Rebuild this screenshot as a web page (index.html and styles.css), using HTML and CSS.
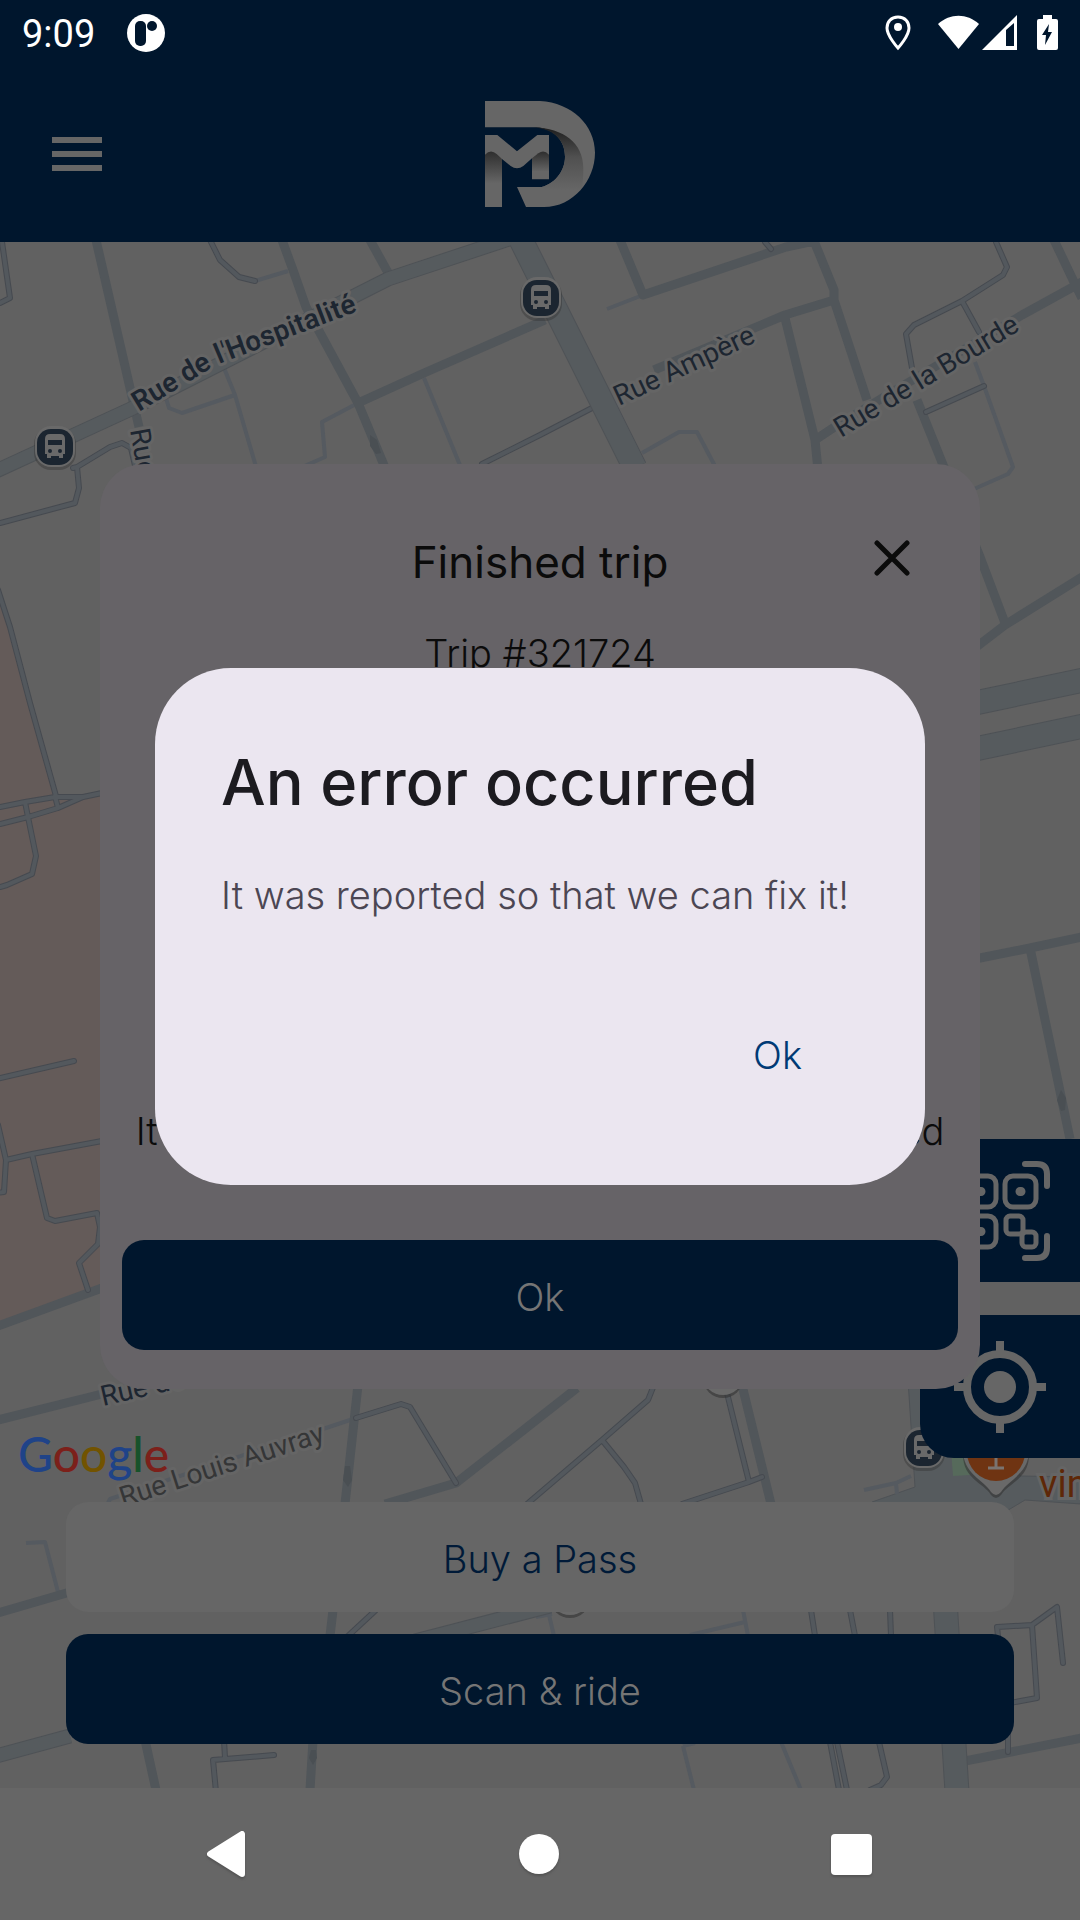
FILE: index.html
```html
<!DOCTYPE html>
<html lang="en">
<head>
<meta charset="utf-8">
<meta name="viewport" content="width=device-width, initial-scale=1">
<title>Ride</title>
<link rel="stylesheet" href="styles.css">
</head>
<body>
<div class="screen">
  <header class="top">
    <div class="status">
      <span class="status__time">9:09</span>
      <svg class="status__app" viewBox="0 0 38 38" width="38" height="38" aria-hidden="true">
        <circle cx="19" cy="19" r="19" fill="#fff"/>
        <rect x="8" y="7" width="11" height="25" rx="5" fill="#00162d"/>
        <circle cx="25" cy="12" r="5" fill="#00162d"/>
      </svg>
      <svg class="status__icons" viewBox="0 0 176 36" width="176" height="36" aria-hidden="true">
        <path d="M14 2C7 2 3 7 3 13c0 8 11 20 11 20s11-12 11-20c0-6-4-11-11-11z" fill="none" stroke="#fff" stroke-width="3"/>
        <circle cx="14" cy="12" r="4" fill="#fff"/>
        <path d="M54 9C66-2 83-2 95 9L74.500 34z" fill="#fff"/>
        <path fill-rule="evenodd" d="M98 35L133 0V35zM122 15V31H130V8z" fill="#fff"/>
        <path d="M159 0h9v4h4q2 0 2 2v27q0 2-2 2h-17q-2 0-2-2V6q0-2 2-2h4z" fill="#fff"/>
        <path d="M165 9l-7 11h4l-1 10 7-13h-4z" fill="#00162d"/>
      </svg>
    </div>
    <div class="appbar">
      <button class="appbar__menu" type="button" aria-label="Menu">
        <svg viewBox="0 0 50 34" width="50" height="34"><path d="M0 3H50M0 17H50M0 31H50" stroke="#666" stroke-width="6"/></svg>
      </button>
      <svg class="appbar__logo" viewBox="75 63 330 318" width="110" height="106" role="img" aria-label="MD">
        <defs>
          <linearGradient id="bowl" gradientUnits="userSpaceOnUse" x1="310" y1="150" x2="310" y2="330">
            <stop offset="0" stop-color="#222"/><stop offset=".45" stop-color="#505050"/><stop offset="1" stop-color="#666"/>
          </linearGradient>
          <linearGradient id="leg" x1="0" y1="0" x2="0" y2="1">
            <stop offset="0" stop-color="#2e2e2e"/><stop offset="1" stop-color="#666"/>
          </linearGradient>
        </defs>
        <path fill="#666" d="M75 63H240C335 68 405 135 405 218C405 300 340 381 252 381H198L171 321H245C290 308 315 268 315 230C315 188 290 148 230 142H75Z"/>
        <path fill="url(#bowl)" d="M220 142C312 145 370 190 370 265Q370 300 366 321C340 350 300 352 270 345L245 321C290 308 315 268 315 230C315 188 290 148 220 142Z"/>
        <path fill="#666" d="M75 165H112L171 214L232 165H267V298H216V235L190 258Q171 272 152 258L126 237V381H75Z"/>
        <path fill="url(#leg)" d="M75 224Q92 206 110 222L126 237V310H75Z"/>
        <path fill="url(#leg)" d="M216 235L235 220Q252 208 267 224V275H216Z"/>
      </svg>
    </div>
  </header>

  <main class="map">
    <svg class="map__canvas" viewBox="0 242 1080 1546" preserveAspectRatio="xMidYMid slice" aria-hidden="true">
      <defs>
        <g id="bus">
          <rect x="-21" y="-20" width="42" height="43" rx="17" fill="#333" opacity=".4"/>
          <rect x="-20" y="-21" width="40" height="41" rx="16" fill="#696969"/>
          <rect x="-18" y="-18" width="36" height="36" rx="14" fill="#1b2530"/>
          <path fill="#696969" fill-rule="evenodd" d="M-5-13H5Q10-13 10-8V7H8V11H4V9H-4V11H-8V7H-10V-8Q-10-13-5-13ZM-7-7V-2H7V-7ZM-5 2A2 2 0 1 0-5 6A2 2 0 1 0-5 2ZM5 2A2 2 0 1 0 5 6A2 2 0 1 0 5 2Z"/>
        </g>
        <g id="lanes">
          <path d="M2 242L10 298L0 303M211 242L220 260L239 277L255 281M73 468L77 467L110 447L122 443L131 448L136 470M77 467L79 488L75 503L0 523"/>
          <path d="M482 464L540 435L592 408M765 242L771 249M996 242L1007 267L1003 275L962 301L914 325L906 334L912 368M962 301L979 332M926 412L984 386"/>
          <path d="M-2 590L10 627L30 703L56 796M0 807L25 802L55 797H83L102 793M0 824L28 817L58 808L83 797M55 796L58 808M25 802L28 817L36 856L32 874L7 885L0 887"/>
          <path d="M-4 1079L74 1061M-2 1125L6 1160L4 1192L-4 1193M6 1160L32 1154L102 1141M32 1154L47 1218L55 1221L97 1213L100 1227L98 1244L79 1263L88 1290"/>
          <path d="M356 1418L401 1404L410 1407L456 1483M527 1504L602 1440L648 1400L654 1385M602 1440L624 1467L635 1483L641 1504M726 1389L749 1482M682 1504L749 1482L762 1477"/>
          <path d="M224 1740L225 1758M274 1755L213 1760L216 1792M376 1610L348 1636M811 1610L815 1636M850 1610L855 1636M890 1610L891 1636"/>
          <path d="M998 1636L997 1627L1032 1625L1057 1607L1063 1663M1032 1625L1037 1698L1010 1703M1008 1735V1752M830 1742L839 1790M837 1742L847 1790M879 1742L887 1777L881 1785L870 1790"/>
        </g>
      </defs>
      <rect y="242" width="1080" height="1546" fill="#616161"/>
      <path fill="#645b59" d="M0 597L10 627L30 703L56 796L100 793V1290L0 1324Z"/>
      <path fill="#565b5e" stroke="#4e5256" stroke-width="1" d="M908 1380L915 1487L872 1502L870 1515H1000L1025 1500L1081 1504V1477L1020 1476L1000 1380Z"/>
      <path fill="#566a5b" d="M951 1450H970V1475L953 1476Z"/>
      <g class="road road--path">
        <path d="M255 281L288 271M358 403L322 422L325 457L300 468M424 378L462 470M224 368L235 395L257 470M235 395L182 413L169 408L166 398"/>
        <path d="M607 309L643 295M975 362L984 386L1013 467L1008 474L974 489M642 453L679 432H697L716 468M107 1505L110 1499L329 1427L356 1418"/>
        <path d="M26 1543L45 1542L58 1592M864 1490L896 1483L911 1476M896 1483L897 1494M743 1610L748 1636M690 1635L745 1622M549 1615L554 1636M536 1617L552 1614M683 1746L694 1790M683 1746L695 1743M781 1742L801 1790"/>
      </g>
      <g class="road road--street">
        <path d="M96 240L139 427M282 240L293 270L306 307L358 403L386 470M370 240L391 278M545 320L424 373L358 403"/>
        <path d="M620 240L643 295L786 247L814 241L834 290V300L867 400M834 300L785 315L654 370M785 318L815 440L818 470M815 440L833 428L884 397L1022 315L1082 282M1054 240L1074 282L1082 298"/>
        <path d="M917 400L980 557L1005 623M975 648L1005 625L1082 577M975 959L1030 948L1082 937M1030 948L1070 1139"/>
        <path d="M-2 1326L102 1288M-2 1420L102 1394M358 1385L345 1504M333 1610L330 1636M313 1740L310 1790M385 1504L456 1483L577 1388M-2 1613L70 1592M145 1740L156 1790M742 1385L771 1504M965 1761L1082 1738"/>
      </g>
      <g class="road road--lane-edge"><use href="#lanes"/></g>
      <g class="road road--lane"><use href="#lanes"/></g>
      <g class="road road--main-edge">
        <path d="M-4 471L133 408L388 279L512 238M-4 1756L70 1736M415 1641L550 1606"/>
        <path class="road--wide" d="M520 238L635 468M975 703L1084 680M975 749L1084 726M945 1600L957 1792"/>
      </g>
      <g class="road road--main">
        <path d="M-4 471L133 408L388 279L512 238M-4 1756L70 1736M415 1641L550 1606"/>
        <path class="road--wide" d="M520 238L635 468M975 703L1084 680M975 749L1084 726M945 1600L957 1792"/>
      </g>
      <g fill="#4a4f53">
        <path d="M370 435L377 440L381 453L376 454L370 446Z"/>
        <path d="M1061 1090L1066 1098L1065 1110L1061 1111L1057 1100Z"/>
        <path d="M345 1466H350L352 1480L348 1487L343 1480Z"/>
        <path d="M311 1750H316L317 1758L313 1765L309 1758Z"/>
      </g>
      <path id="hospitalite" fill="none" d="M139 412L213 367Q222 362 232 359L390 299"/>
      <g class="label">
        <text class="label--major"><textPath href="#hospitalite">Rue de l'Hospitalité</textPath></text>
        <text transform="translate(619 406) rotate(-25)">Rue Ampère</text>
        <text transform="translate(841 438) rotate(-31)">Rue de la Bourde</text>
        <text transform="translate(130 430) rotate(80)">Rue</text>
        <text transform="translate(103 1406) rotate(-13)">Rue de</text>
        <text class="label--minor" transform="translate(123 1507) rotate(-18)">Rue Louis Auvray</text>
      </g>
      <use href="#bus" x="55" y="447"/>
      <use href="#bus" x="541" y="298"/>
      <use href="#bus" x="924" y="1448"/>
      <circle cx="723" cy="1378" r="20" fill="#333" opacity=".6"/>
      <circle cx="723" cy="1375" r="20" fill="#696969"/>
      <circle cx="570" cy="1598" r="20" fill="#333" opacity=".6"/>
      <circle cx="570" cy="1595" r="20" fill="#696969"/>
      <path d="M963 1452C963 1476 984 1480 991 1492Q996 1498 1001 1492C1008 1480 1029 1476 1029 1452Z" fill="#333" opacity=".6" transform="translate(0 3)"/>
      <path d="M963 1450C963 1474 984 1480 991 1492Q996 1498 1001 1492C1008 1480 1029 1474 1029 1450Z" fill="#696969"/>
      <circle cx="996" cy="1452" r="29" fill="#6f3412"/>
      <path d="M988 1468H1004M996 1468V1450" stroke="#7a7470" stroke-width="3"/>
      <text class="place" x="1039" y="1497">vin</text>
    </svg>

    <div class="side">
      <button class="side__btn" type="button" aria-label="Scan a QR code">
        <svg viewBox="0 0 100 100" width="100" height="100" fill="none" stroke="#666" stroke-width="5">
          <rect x="15" y="15" width="31" height="31" rx="8"/><rect x="55" y="15" width="31" height="31" rx="8"/>
          <rect x="15" y="55" width="31" height="31" rx="8"/>
          <rect x="56" y="55" width="17" height="18" rx="4"/><rect x="72" y="71" width="14" height="15" rx="4"/>
          <path stroke-width="9" stroke-linecap="round" d="M30 30.500h1M70 30.500h1M30 70.500h1"/>
          <path stroke-width="6" stroke-linecap="round" d="M75 3H87Q97 3 97 13V25M75 97H87Q97 97 97 87V75M25 3H13Q3 3 3 13V25M25 97H13Q3 97 3 87V75"/>
        </svg>
      </button>
      <button class="side__btn" type="button" aria-label="My location">
        <svg viewBox="0 0 92 92" width="92" height="92" fill="none" stroke="#666" stroke-width="8">
          <circle cx="46" cy="46" r="33"/><circle cx="46" cy="46" r="16" fill="#666" stroke="none"/>
          <path d="M46 0V13M46 79V92M0 46H13M79 46H92"/>
        </svg>
      </button>
    </div>

    <div class="credit"><span class="c-blue">G</span><span class="c-red">o</span><span class="c-yellow">o</span><span class="c-blue">g</span><span class="c-green">l</span><span class="c-red">e</span></div>
    <div class="actions">
      <button class="btn btn--light" type="button">Buy a Pass</button>
      <button class="btn" type="button">Scan &amp; ride</button>
    </div>
  </main>

  <nav class="nav">
    <button type="button" aria-label="Back"><svg viewBox="0 0 40 46" width="40" height="46"><path d="M4 23L36 3V43Z" fill="#fff" stroke="#fff" stroke-width="6" stroke-linejoin="round"/></svg></button>
    <button type="button" aria-label="Home"><svg viewBox="0 0 40 40" width="40" height="40"><circle cx="20" cy="20" r="20" fill="#fff"/></svg></button>
    <button type="button" aria-label="Recent apps"><svg viewBox="0 0 41 41" width="41" height="41"><rect width="41" height="41" rx="4" fill="#fff"/></svg></button>
  </nav>

  <div class="layer">
    <section class="card" aria-labelledby="trip-title">
      <div class="card__head">
        <h2 class="card__title" id="trip-title">Finished trip</h2>
        <button class="card__close" type="button" aria-label="Close">
          <svg viewBox="0 0 36 36" width="36" height="36"><path d="M3 3L33 33M33 3L3 33" stroke="#0b0b0b" stroke-width="5" stroke-linecap="round"/></svg>
        </button>
      </div>
      <p class="card__trip">Trip #321724</p>
      <p class="card__note">It was a very nice ride, the trip is now finished</p>
      <button class="btn card__ok" type="button">Ok</button>
    </section>
  </div>

  <div class="layer">
    <section class="dialog" role="alertdialog" aria-labelledby="err-title" aria-describedby="err-text">
      <h1 class="dialog__title" id="err-title">An error occurred</h1>
      <p class="dialog__text" id="err-text">It was reported so that we can fix it!</p>
      <button class="dialog__ok" type="button">Ok</button>
    </section>
  </div>
</div>
</body>
</html>
```
FILE: styles.css
```css
* { box-sizing: border-box; }
body {
  margin: 0;
  background: #616161;
  font-family: Inter, "Liberation Sans", sans-serif;
  font-size: 38px;
  font-weight: 300;
}
button {
  border: 0;
  padding: 0;
  background: none;
  color: inherit;
  font: inherit;
}
h1, h2, p { margin: 0; }
svg { display: block; }

.screen {
  position: relative;
  display: flex;
  flex-direction: column;
  min-height: 100vh;
  overflow: hidden;
}

/* Status bar and app bar */
.top { background: #00162d; }
.status {
  display: flex;
  align-items: center;
  height: 66px;
  padding: 0 20px 0 22px;
  color: #fff;
  font-family: Roboto, sans-serif;
  font-weight: 400;
}
.status__time { line-height: 44px; padding-top: 2px; }
.status__app { margin-left: 32px; }
.status__icons { margin-left: auto; }
.appbar {
  display: grid;
  grid-template-columns: 1fr auto 1fr;
  align-items: center;
  height: 176px;
  padding: 0 52px;
}
.appbar__menu { justify-self: start; }

/* Map */
.map {
  position: relative;
  flex: 1;
  display: flex;
  flex-direction: column;
  justify-content: flex-end;
}
.map__canvas {
  position: absolute;
  inset: 0;
  width: 100%;
  height: 100%;
}
.road { fill: none; stroke-linejoin: round; }
.road--path { stroke: #555a60; stroke-width: 4; }
.road--street { stroke: #51565a; stroke-width: 9; }
.road--lane-edge { stroke: #464a50; stroke-width: 6; stroke-linecap: round; }
.road--lane { stroke: #53585d; stroke-width: 4; stroke-linecap: round; }
.road--main-edge { stroke: #4e5256; stroke-width: 15; }
.road--main { stroke: #565b5e; stroke-width: 13; }
.road--main-edge .road--wide { stroke-width: 25; }
.road--main .road--wide { stroke-width: 23; }
.label {
  fill: #1d2631;
  stroke: #656565;
  stroke-width: 6px;
  stroke-linejoin: round;
  paint-order: stroke;
  font-family: Roboto, sans-serif;
  font-size: 28px;
  font-weight: 400;
}
.label--major { font-weight: 600; }
.label--minor { fill: #353637; }
.place {
  fill: #5e2707;
  stroke: #656565;
  stroke-width: 6px;
  paint-order: stroke;
  font-family: Roboto, sans-serif;
  font-size: 38px;
  font-weight: 400;
}

.side {
  position: absolute;
  right: 0;
  bottom: 330px;
  display: flex;
  flex-direction: column;
  gap: 33px;
}
.side__btn {
  display: grid;
  place-items: center;
  width: 160px;
  height: 143px;
  border-radius: 34px 0 0 34px;
  background: #00162d;
}

.credit {
  position: relative;
  padding: 0 18px 14px;
  font-family: Lato, sans-serif;
  font-size: 48px;
  font-weight: 500;
  line-height: 68px;
}
.c-blue { color: #1f4388; }
.c-red { color: #7c201a; }
.c-yellow { color: #725300; }
.c-green { color: #17522a; }

.actions {
  position: relative;
  display: flex;
  flex-direction: column;
  gap: 22px;
  padding: 0 66px 44px;
}
.btn {
  height: 110px;
  padding-top: 4px;
  border-radius: 22px;
  background: #00162d;
  color: #757575;
}
.btn--light {
  background: #666;
  color: #001a38;
}

/* System navigation */
.nav {
  display: flex;
  justify-content: space-between;
  align-items: center;
  height: 132px;
  padding: 0 208px 0 206px;
  background: #666;
}
.nav svg { filter: drop-shadow(0 2px 1px #4448); }

/* Overlays, centred between the system bars */
.layer {
  position: absolute;
  inset: 0;
  display: grid;
  place-items: center;
  padding: 66px 0 133px;
  pointer-events: none;
}
.layer > * { pointer-events: auto; }

.card {
  display: flex;
  flex-direction: column;
  width: calc(100% - 200px);
  min-height: 925px;
  padding: 66px 22px 39px;
  border-radius: 44px;
  background: #666367;
  color: #0b0b0b;
  text-align: center;
}
.card__head {
  display: grid;
  grid-template-columns: 1fr auto 1fr;
  align-items: center;
  padding: 0 48px;
}
.card__title {
  grid-column: 2;
  font-size: 44px;
  font-weight: 400;
  line-height: 64px;
}
.card__close {
  justify-self: end;
  padding-bottom: 8px;
}
.card__trip {
  margin-top: 31px;
  line-height: 56px;
}
.card__note {
  margin: auto 0 81px;
  line-height: 56px;
  white-space: nowrap;
}

.dialog {
  display: flex;
  flex-direction: column;
  width: calc(100% - 310px);
  padding: 66px 66px 75px;
  border-radius: 76px;
  background: #ebe6f0;
}
.dialog__title {
  color: #1c1b20;
  font-size: 63px;
  font-weight: 500;
  line-height: 96px;
}
.dialog__text {
  margin-top: 37px;
  color: #4b4653;
  line-height: 56px;
  white-space: nowrap;
}
.dialog__ok {
  align-self: flex-end;
  height: 110px;
  margin-top: 77px;
  padding: 0 57px;
  color: #003a75;
}
```
